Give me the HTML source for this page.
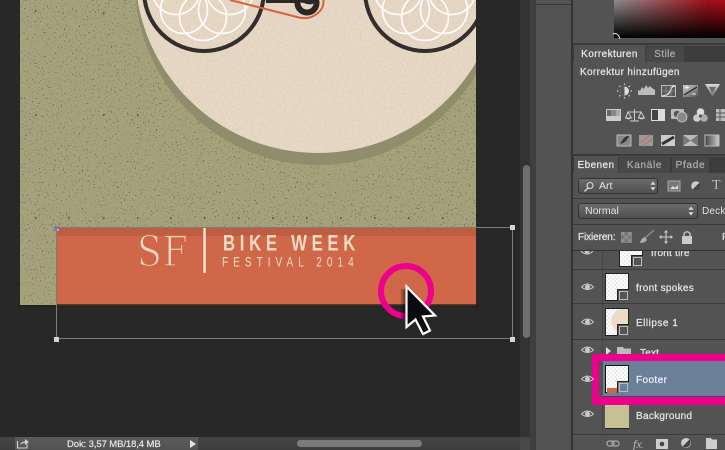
<!DOCTYPE html>
<html lang="de">
<head>
<meta charset="utf-8">
<title>Photoshop</title>
<style>
html,body{margin:0;padding:0;width:725px;height:450px;overflow:hidden;background:#282828}
body{position:relative;font-family:"Liberation Sans",sans-serif;font-size:10px;color:#ddd}
.a{position:absolute}
.t{position:absolute;white-space:nowrap;line-height:12px;font-size:10px;letter-spacing:.2px;-webkit-text-stroke:.25px currentColor}
.tab{position:absolute;text-align:center;line-height:17px;font-size:10px;letter-spacing:.4px;white-space:nowrap;-webkit-text-stroke:.25px currentColor}
.dd{position:absolute;box-sizing:border-box;border:1px solid #333;border-radius:3px;background:linear-gradient(#6b6b6b,#505050);line-height:14px;font-size:10.5px;color:#e4e4e4;white-space:nowrap}
.ln{position:absolute;left:573px;width:152px;height:1px;background:#3a3a3a}
.th{position:absolute;box-sizing:border-box;width:24px;height:28px;border:1px solid #222;background-color:#fff;background-image:conic-gradient(#ececec 25%,#fff 0 50%,#ececec 0 75%,#fff 0);background-size:4px 4px}
.so{position:absolute;width:12px;height:12px;background:#555;border-left:1.5px solid #222;border-top:1.5px solid #222;box-sizing:border-box}
.so i{position:absolute;left:1px;top:1px;width:7px;height:7px;border:1px solid #bbb}
</style>
</head>
<body>

<!-- Canvas and artwork -->
<svg class="a" style="left:0;top:0" width="530" height="450" viewBox="0 0 530 450">
  <defs>
    <filter id="sp" x="0" y="0" width="100%" height="100%" color-interpolation-filters="sRGB">
      <feTurbulence type="fractalNoise" baseFrequency=".62" numOctaves="3" seed="7"/>
      <feColorMatrix values="0 0 0 0 .3  0 0 0 0 .29  0 0 0 0 .2  9 0 0 0 -5.9"/>
    </filter>
    <filter id="gr" x="0" y="0" width="100%" height="100%" color-interpolation-filters="sRGB">
      <feTurbulence type="fractalNoise" baseFrequency=".45" numOctaves="2" seed="3"/>
      <feColorMatrix values="0 0 0 0 .6  0 0 0 0 .52  0 0 0 0 .42  2 0 0 0 -.9"/>
    </filter>
    <clipPath id="art"><rect x="20" y="0" width="456" height="305"/></clipPath>
    <clipPath id="cream"><circle cx="318" cy="-30" r="183"/></clipPath>
    <linearGradient id="fade" x1="0" y1="0" x2="1" y2="0">
      <stop offset="0" stop-color="#000" stop-opacity="0"/>
      <stop offset="1" stop-color="#000" stop-opacity=".7"/>
    </linearGradient>
  </defs>

  <rect width="530" height="450" fill="#282828"/>
  <rect x="18" y="303" width="460" height="4" fill="#222"/>

  <g clip-path="url(#art)">
    <rect x="20" y="0" width="456" height="305" fill="#a5a17b"/>
    <rect x="20" y="0" width="456" height="305" filter="url(#sp)" opacity=".7"/>
    <path d="M35 11h1.500M103 13h1.500M137 10h1.500M35 115h1.500M103 115h1.500M137 115h1.500M204 116h1.500M441 115h1.500M35 218h1.500M68 218h1.500M103 218h1.500M137 218h1.500M170 218h1.500M204 218h1.500M238 218h1.500M272 218h1.500M306 218h1.500M340 218h1.500M374 218h1.500M408 218h1.500M442 218h1.500" stroke="#4a4834" stroke-width="1.500"/>
    <circle cx="318" cy="-18" r="183" fill="#908d6c"/>
    <circle cx="318" cy="-30" r="183" fill="#e6d8c4"/>
    <circle cx="318" cy="-30" r="183" filter="url(#gr)" clip-path="url(#cream)" opacity=".13"/>

    <!-- Left wheel -->
    <g fill="none" stroke="#fff" stroke-width="1.6">
      <circle cx="203" cy="17" r="23.5"/>
      <circle cx="184" cy="10" r="23.5"/>
      <circle cx="222" cy="10" r="23.5"/>
      <circle cx="176" cy="-9" r="23.5"/>
      <circle cx="230" cy="-9" r="23.5"/>
      <!-- Right wheel -->
      <circle cx="425" cy="17" r="23.5"/>
      <circle cx="406" cy="10" r="23.5"/>
      <circle cx="444" cy="10" r="23.5"/>
      <circle cx="398" cy="-9" r="23.5"/>
      <circle cx="452" cy="-9" r="23.5"/>
    </g>
    <circle cx="204" cy="-9" r="60" fill="none" stroke="#332d2b" stroke-width="4"/>
    <circle cx="425" cy="-9" r="60" fill="none" stroke="#332d2b" stroke-width="4"/>

    <!-- Crank and chain -->
    <path d="M266 -2H300V3H266Z" fill="#2c2725"/>
    <circle cx="307" cy="3" r="9.5" fill="none" stroke="#2c2725" stroke-width="6"/>
    <path d="M298 -2H316L313 4Q308 5 304 3L298 2Z" fill="#2c2725"/>
    <path d="M230 0L299 17.5Q310 20 318 13Q324 8 323.5 0" fill="none" stroke="#d8623c" stroke-width="2"/>
  </g>

  <!-- Footer -->
  <rect x="56" y="227" width="420" height="78" fill="#cf6748"/>
  <rect x="56" y="227" width="420" height="9" fill="#bd5e42"/>
  <rect x="56" y="304" width="420" height="1.5" fill="#57362c"/>

  <text transform="translate(137 266) scale(.86 1)" font-family="'DejaVu Serif',serif" font-size="42" letter-spacing="1" fill="#ecdcc4" stroke="#cf6748" stroke-width="1.400">SF</text>
  <rect x="203.4" y="228" width="2.3" height="45" fill="#f6eee0"/>
  <text transform="translate(223 250.5) scale(.76 1)" font-family="'Liberation Sans',sans-serif" font-weight="700" font-size="22" letter-spacing="6.2" fill="#ecdcc4">BIKE WEEK</text>
  <text transform="translate(222 266.5) scale(.72 1)" font-family="'Liberation Sans',sans-serif" font-size="14" letter-spacing="6.95" fill="#ecdcc4">FESTIVAL 2014</text>

  <!-- Transform box -->
  <rect x="56.5" y="227.5" width="456" height="111" fill="none" stroke="#7c7c7c" stroke-width="1"/>
  <rect x="54" y="226" width="5" height="5" fill="#7a7ab0"/>
  <rect x="57" y="229" width="2" height="2" fill="#e5a090"/>
  <rect x="510" y="225" width="5" height="5" fill="#d5d5d5"/>
  <rect x="54" y="337" width="5" height="5" fill="#d5d5d5"/>
  <rect x="510" y="337" width="5" height="5" fill="#d5d5d5"/>

  <!-- Click highlight and cursor -->
  <circle cx="406" cy="291" r="25" fill="none" stroke="#ec008c" stroke-width="6"/>
  <rect x="400" y="289" width="7" height="30" fill="url(#fade)"/>
  <path d="M406.5 286.5V327L415.5 319.5L423 334L430 330.5L423 316.5L435 315.5Z" fill="#0b0b0d" stroke="#fff" stroke-width="2.2" stroke-linejoin="miter"/>

  <!-- Vertical scrollbar -->
  <rect x="520" y="0" width="10" height="437" fill="#333"/>
  <rect x="523" y="165" width="7" height="173" rx="3.5" fill="#6f6f6f"/>
</svg>

<!-- Status bar -->
<div class="a" style="left:0;top:437px;width:530px;height:13px;background:linear-gradient(#444,#3e3e3e)"></div>
<div class="a" style="left:15px;top:437px;width:183px;height:13px;background:linear-gradient(#5b5b5b,#535353)"></div>
<svg class="a" style="left:16px;top:438px" width="14" height="11" viewBox="0 0 14 11"><path d="M1.5 3V10H11V6" fill="none" stroke="#d0d0d0" stroke-width="1.1"/><path d="M4 7Q5 3.5 9 3.5V1L13 4L9 7V5Q6 5 4 7Z" fill="#d0d0d0"/></svg>
<div class="t" style="left:67px;top:439px;font-size:9.5px;letter-spacing:-.1px;color:#e2e2e2">Dok: 3,57 MB/18,4 MB</div>
<div class="a" style="left:190px;top:440px;width:0;height:0;border-left:6px solid #e5e5e5;border-top:4px solid transparent;border-bottom:4px solid transparent"></div>
<div class="a" style="left:297px;top:440px;width:125px;height:7px;border-radius:4px;background:#7a7a7a"></div>
<div class="a" style="left:520px;top:437px;width:13px;height:13px;background:#484848"></div>

<!-- Right docks -->
<div class="a" style="left:530px;top:0;width:195px;height:450px;background:#535353"></div>
<div class="a" style="left:530px;top:0;width:6px;height:450px;background:#3f3f3f"></div>
<div class="a" style="left:536px;top:4px;width:35px;height:1px;background:#3a3a3a"></div>
<div class="a" style="left:571px;top:0;width:2px;height:450px;background:#333"></div>

<!-- Colour picker -->
<div class="a" style="left:614px;top:0;width:111px;height:38px;background:linear-gradient(transparent,#000),linear-gradient(90deg,#8d8d8d,#a00f18 85%,#b00c16)"></div>
<svg class="a" style="left:612px;top:32px" width="10" height="7" viewBox="0 0 10 7"><path d="M1 2Q6 0 8 7" fill="none" stroke="#eee" stroke-width="1"/></svg>
<div class="a" style="left:573px;top:43px;width:152px;height:2px;background:#3a3a3a"></div>

<!-- Korrekturen panel -->
<div class="a" style="left:573px;top:46px;width:152px;height:16px;background:#3d3d3d"></div>
<div class="tab" style="left:574px;top:46px;width:71px;height:16px;background:#535353;color:#e5e5e5">Korrekturen</div>
<div class="tab" style="left:646px;top:47px;width:38px;height:15px;background:#484848;color:#aaa;line-height:16px">Stile</div>
<div class="t" style="left:580px;top:67px;font-size:10px;color:#e4e4e4;letter-spacing:.35px">Korrektur hinzufügen</div>

<svg class="a" style="left:573px;top:80px" width="152" height="70" viewBox="573 80 152 70">
  <defs>
    <linearGradient id="ig" x1="0" y1="0" x2="1" y2="0"><stop offset="0" stop-color="#444"/><stop offset="1" stop-color="#ccc"/></linearGradient>
    <linearGradient id="ig2" x1="0" y1="0" x2="1" y2="1"><stop offset="0" stop-color="#cfcfcf"/><stop offset="1" stop-color="#555"/></linearGradient>
    <linearGradient id="ig3" x1="0" y1="0" x2="0" y2="1"><stop offset="0" stop-color="#ddd"/><stop offset="1" stop-color="#666"/></linearGradient>
  </defs>
  <!-- Row 1 -->
  <circle cx="624.5" cy="91" r="4.5" fill="#ddd"/><path d="M624.5 86.5A4.5 4.5 0 0 0 624.5 95.5Z" fill="#555"/>
  <path d="M624.5 83.5V85M624.5 97V98.5M617 91H618.5M630.5 91H632M619.2 85.7L620.3 86.8M628.7 95.2L629.8 96.3M619.2 96.3L620.3 95.2M628.7 86.8L629.8 85.7" stroke="#ccc" stroke-width="1.2"/>
  <path d="M638 95V90L640 91L642 87L644 89L646 85L648 88L650 86L652 88L655 90V95Z" fill="#bdbdbd"/>
  <rect x="661.5" y="85.5" width="14" height="11" fill="#5c5c5c" stroke="#bbb"/><path d="M662 96Q669 96 671 89Q672 86 675 86" fill="none" stroke="#eee" stroke-width="1.3"/><path d="M666 86V96M671 86V96M662 91H675" stroke="#999" stroke-width=".6"/>
  <rect x="683" y="85" width="15" height="12" fill="url(#ig2)"/><path d="M684 95L697 87" stroke="#222" stroke-width="1.2"/><path d="M685 87.5H689M687 85.5V89.5M692 94H696" stroke="#eee" stroke-width=".9"/>
  <path d="M705 84H720L712.5 97Z" fill="url(#ig3)"/><path d="M709 87H716L712.5 93Z" fill="#6a6a6a"/>
  <!-- Row 2 -->
  <rect x="606" y="109" width="15" height="12" fill="#ccc"/><rect x="607" y="110" width="4" height="6" fill="#666"/><rect x="611" y="110" width="5" height="6" fill="#888"/><rect x="616" y="110" width="4" height="6" fill="#aaa"/>
  <path d="M634.5 109V121M628 112H641M628 112L625.5 118H631.5ZM641 112L638.5 118H644.5ZM630 121H639" fill="none" stroke="#ccc" stroke-width="1"/><path d="M625.5 118Q628.5 121 631.5 118ZM638.5 118Q641.5 121 644.5 118Z" fill="#ccc"/>
  <rect x="651" y="109" width="14" height="12" fill="#ddd"/><rect x="652" y="110" width="6" height="10" fill="#444"/>
  <rect x="671" y="109" width="13" height="10" rx="1" fill="#bbb"/><circle cx="677" cy="114" r="3.2" fill="#555"/><circle cx="682" cy="117" r="5" fill="#888" stroke="#ccc" stroke-width=".8"/>
  <circle cx="700.5" cy="112" r="3.8" fill="#ddd"/><circle cx="697" cy="118" r="3.8" fill="#ccc"/><circle cx="704" cy="118" r="3.8" fill="#aaa"/><circle cx="700.5" cy="116" r="1.6" fill="#555"/>
  <rect x="716" y="109" width="12" height="12" fill="#bbb"/><path d="M716 113H725M716 117H725M720 109V121" stroke="#555" stroke-width="1"/>
  <!-- Row 3 -->
  <rect x="617" y="135" width="14" height="11" fill="#888" stroke="#bbb"/><path d="M620 144Q625 135 629 136Q626 143 620 144Z" fill="#333"/>
  <rect x="639" y="135" width="14" height="11" fill="#999"/><path d="M639 144L650 135M643 146L653 138" stroke="#b08080" stroke-width="2"/>
  <rect x="661" y="135" width="14" height="11" fill="#ccc"/><path d="M662 144L674 137" stroke="#333" stroke-width="3"/>
  <path d="M683 135H698V146H683Z" fill="#bbb"/><path d="M683 135L690.5 140.500L683 146ZM698 135L690.500 140.500L698 146Z" fill="#777"/>
  <rect x="705" y="135" width="14" height="11" fill="url(#ig)" stroke="#bbb"/>
</svg>

<div class="a" style="left:573px;top:154px;width:152px;height:2px;background:#3a3a3a"></div>

<!-- Ebenen panel -->
<div class="a" style="left:573px;top:157px;width:152px;height:16px;background:#3d3d3d"></div>
<div class="tab" style="left:574px;top:157px;width:44px;height:16px;background:#535353;color:#e8e8e8">Ebenen</div>
<div class="tab" style="left:619px;top:158px;width:51px;height:15px;background:#484848;color:#aaa;line-height:16px;letter-spacing:.7px">Kanäle</div>
<div class="tab" style="left:672px;top:158px;width:37px;height:15px;background:#484848;color:#aaa;line-height:16px;letter-spacing:.7px">Pfade</div>

<div class="dd" style="left:578px;top:178px;width:80px;height:16px;padding-left:20px">Art</div>
<svg class="a" style="left:583px;top:181px" width="12" height="12" viewBox="0 0 12 12"><circle cx="7" cy="4.500" r="3" fill="none" stroke="#ddd" stroke-width="1.100"/><path d="M5 7L1.500 10.500" stroke="#ddd" stroke-width="1.300"/></svg>
<svg class="a" style="left:650px;top:181px" width="6" height="10" viewBox="0 0 6 10"><path d="M3 0.500L5.500 3.800H.5ZM3 9.500L5.500 6.200H.5Z" fill="#ddd"/></svg>
<svg class="a" style="left:667px;top:178px" width="58" height="16" viewBox="667 178 58 16">
  <rect x="668" y="181" width="12" height="10" fill="#777" stroke="#aaa"/><path d="M670 189L673 186L675 188L678 185V189Z" fill="#ddd"/>
  <circle cx="696" cy="186" r="4.800" fill="#ccc"/><path d="M699.400 182.600A4.800 4.800 0 0 1 692.600 189.400Z" fill="#444"/>
</svg>
<div class="a" style="left:712px;top:178px;font-family:'Liberation Serif',serif;font-size:14px;line-height:16px;color:#bbb">T</div>

<div class="ln" style="top:198px"></div>
<div class="dd" style="left:578px;top:203px;width:120px;height:16px;padding-left:6px;line-height:15px">Normal</div>
<svg class="a" style="left:688px;top:206px" width="6" height="10" viewBox="0 0 6 10"><path d="M3 0.500L5.500 3.800H.5ZM3 9.500L5.500 6.200H.5Z" fill="#ddd"/></svg>
<div class="t" style="left:702px;top:206px;color:#e0e0e0;-webkit-text-stroke:0">Deck</div>
<div class="ln" style="top:224px"></div>

<div class="t" style="left:578px;top:232px;letter-spacing:-.1px;color:#e4e4e4">Fixieren:</div>
<div class="a" style="left:621px;top:232px;width:11px;height:11px;background-color:#8a8a8a;background-image:conic-gradient(#777 25%,#8f8f8f 0 50%,#777 0 75%,#8f8f8f 0);background-size:7px 7px"></div>
<svg class="a" style="left:638px;top:229px" width="60" height="16" viewBox="638 229 60 16">
  <path d="M654 230L645 238" stroke="#888" stroke-width="1.500"/><path d="M640 243Q641 238 645 237L647 240Q645 243 640 243Z" fill="#aaa"/>
  <path d="M666 232V242M661 237H671" stroke="#ccc" stroke-width="1.100"/><path d="M666 230L668 232.500H664ZM666 244L668 241.500H664ZM659 237L661.500 235V239ZM673 237L670.500 235V239Z" fill="#ccc"/>
  <rect x="682" y="236" width="10" height="8" fill="#ccc"/><path d="M684 236V233.500Q687 230 690 233.500V236" fill="none" stroke="#ccc" stroke-width="1.300"/>
</svg>
<div class="t" style="left:722px;top:232px">F</div>
<div class="ln" style="top:250px;height:1px;background:#333"></div>

<!-- Layers -->
<div class="a" style="left:602px;top:251px;width:1px;height:183px;background:#444"></div>

<div class="a" style="left:573px;top:251px;width:152px;height:18px;overflow:hidden">
  <div class="th" style="left:46px;top:-10px;width:24px;height:26px"></div>
  <div class="so" style="left:58px;top:4px"><i></i></div>
  <div class="t" style="left:78px;top:-3px;color:#e0e0e0">front tire</div>
  <svg class="a" style="left:7px;top:-6px" width="14" height="12" viewBox="0 0 14 12"><path d="M1 6Q7 0 13 6Q7 12 1 6Z" fill="none" stroke="#ccc"/><circle cx="7" cy="6" r="2.500" fill="#ccc"/></svg>
</div>
<div class="ln" style="top:269px;background:#3c3c3c"></div>

<div class="th" style="left:605px;top:273px"></div>
<div class="so" style="left:617px;top:289px"><i></i></div>
<div class="t" style="left:636px;top:283px;color:#e4e4e4;letter-spacing:.3px">front spokes</div>
<div class="ln" style="top:303px;background:#3c3c3c"></div>

<div class="th" style="left:605px;top:308px"></div>
<div class="a" style="left:611px;top:309px;width:17px;height:24px;background:#ecdcc6;border-radius:12px 0 0 12px"></div>
<div class="so" style="left:617px;top:324px"><i></i></div>
<div class="t" style="left:636px;top:318px;color:#e4e4e4;letter-spacing:.5px">Ellipse 1</div>
<div class="ln" style="top:339px;background:#3c3c3c"></div>

<div class="a" style="left:606px;top:347px;width:0;height:0;border-left:5px solid #ddd;border-top:4px solid transparent;border-bottom:4px solid transparent"></div>
<svg class="a" style="left:617px;top:345px" width="15" height="12" viewBox="0 0 15 12"><path d="M0 2H6L7 3.500H14V12H0Z" fill="#bbb"/></svg>
<div class="t" style="left:640px;top:348px;color:#e4e4e4">Text</div>

<!-- Selected layer -->
<div class="a" style="left:598px;top:361px;width:127px;height:36px;background:#6b7f99"></div>
<div class="a" style="left:598px;top:361px;width:5px;height:36px;background:#535353"></div>
<div class="th" style="left:605px;top:365px;border-color:#111"></div>
<div class="a" style="left:607px;top:388px;width:10px;height:5px;background:#cf6748"></div>
<div class="so" style="left:617px;top:381px;background:#6b7f99"><i></i></div>
<div class="t" style="left:636px;top:375px;color:#eef;letter-spacing:.4px">Footer</div>
<div class="a" style="left:603px;top:396px;width:122px;height:2px;background:#3f4a58"></div>
<div class="a" style="box-sizing:border-box;left:592px;top:354px;width:140px;height:51px;border:7px solid #ec008c;border-bottom-width:8px"></div>

<div class="a" style="box-sizing:border-box;left:605px;top:405px;width:24px;height:24px;background:#c8c094;border-bottom:1px solid #222"></div>
<div class="t" style="left:636px;top:411px;color:#e4e4e4;letter-spacing:.3px">Background</div>
<div class="ln" style="top:434px;background:#3c3c3c"></div>

<!-- Eyes -->
<svg class="a" style="left:580px;top:280px" width="15" height="145" viewBox="0 0 15 145">
  <g fill="none" stroke="#c8c8c8" stroke-width="1">
    <path d="M1.500 7Q7.500 1 13.500 7Q7.500 12 1.500 7Z"/>
    <path d="M1.500 42Q7.500 36 13.500 42Q7.500 47 1.500 42Z"/>
    <path d="M1.500 70Q7.500 64 13.500 70Q7.500 75 1.500 70Z"/>
    <path d="M1.500 99Q7.500 93 13.500 99Q7.500 104 1.500 99Z"/>
    <path d="M1.500 134Q7.500 128 13.500 134Q7.500 139 1.500 134Z"/>
  </g>
  <g fill="#c8c8c8">
    <circle cx="7.500" cy="7" r="2.500"/><circle cx="7.500" cy="42" r="2.500"/><circle cx="7.500" cy="70" r="2.500"/><circle cx="7.500" cy="99" r="2.500"/><circle cx="7.500" cy="134" r="2.500"/>
  </g>
</svg>

<!-- Panel footer -->
<svg class="a" style="left:600px;top:435px" width="125" height="15" viewBox="600 435 125 15">
  <rect x="607" y="441" width="7" height="5" rx="2.500" fill="none" stroke="#aaa" stroke-width="1.200"/><rect x="612" y="441" width="7" height="5" rx="2.500" fill="none" stroke="#aaa" stroke-width="1.200"/>
  <rect x="656" y="439" width="12" height="10" fill="#ccc"/><circle cx="662" cy="444" r="2.300" fill="#444"/>
  <circle cx="686" cy="443" r="5" fill="#ccc"/><path d="M689.500 439.500A5 5 0 0 1 682.500 446.500Z" fill="#444"/>
  <path d="M706 438H711L712 439.500H717V449H706Z" fill="#ccc"/>
</svg>
<div class="a" style="left:633px;top:438px;font-family:'Liberation Serif',serif;font-style:italic;font-size:12px;line-height:12px;color:#bbb">fx<span style="font-size:7px">.</span></div>

</body>
</html>
